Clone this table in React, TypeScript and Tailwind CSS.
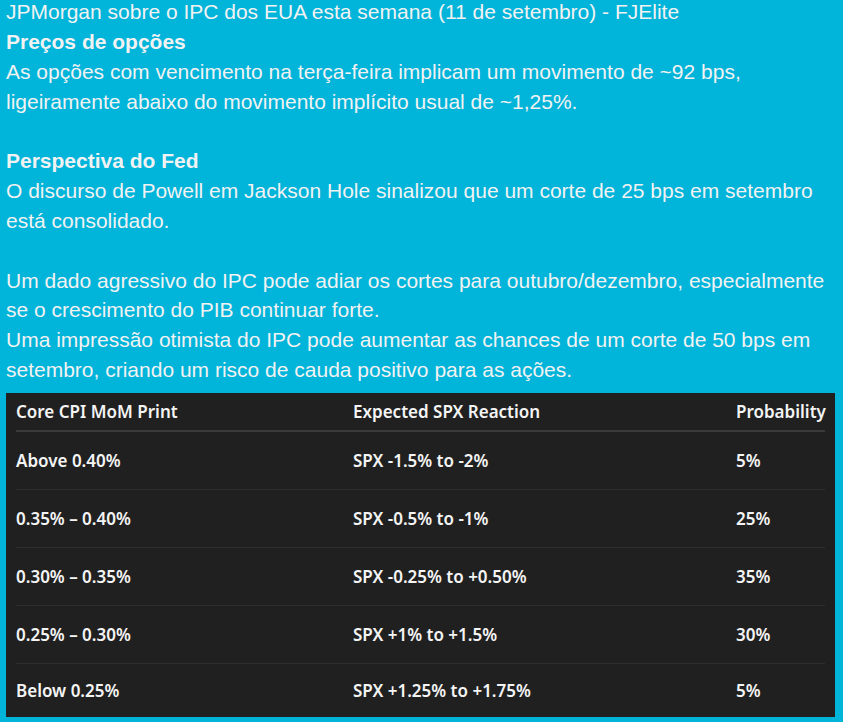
import React from "react";

const rows = [
  ["Above 0.40%", "SPX -1.5% to -2%", "5%"],
  ["0.35% – 0.40%", "SPX -0.5% to -1%", "25%"],
  ["0.30% – 0.35%", "SPX -0.25% to +0.50%", "35%"],
  ["0.25% – 0.30%", "SPX +1% to +1.5%", "30%"],
  ["Below 0.25%", "SPX +1.25% to +1.75%", "5%"],
];

export default function App() {
  return (
    <div className="w-[843px] h-[722px] overflow-hidden bg-[#00b4da] px-[6px]">
      <div
        className="mt-[-3px] text-[21px] leading-[29.85px] text-[#f2f2f2]"
        style={{ fontFamily: '"Liberation Sans", Arial, sans-serif' }}
      >
        <div>JPMorgan sobre o IPC dos EUA esta semana (11 de setembro) - FJElite</div>
        <div className="font-bold">Preços de opções</div>
        <div>As opções com vencimento na terça-feira implicam um movimento de ~92 bps,</div>
        <div>ligeiramente abaixo do movimento implícito usual de ~1,25%.</div>
        <div>&nbsp;</div>
        <div className="font-bold">Perspectiva do Fed</div>
        <div>O discurso de Powell em Jackson Hole sinalizou que um corte de 25 bps em setembro</div>
        <div>está consolidado.</div>
        <div>&nbsp;</div>
        <div>Um dado agressivo do IPC pode adiar os cortes para outubro/dezembro, especialmente</div>
        <div>se o crescimento do PIB continuar forte.</div>
        <div>Uma impressão otimista do IPC pode aumentar as chances de um corte de 50 bps em</div>
        <div>setembro, criando um risco de cauda positivo para as ações.</div>
      </div>
      <div
        className="mt-[8px] w-[829px] h-[324px] bg-[#202020] px-[10px] text-[17px] font-semibold text-[#f4f4f4]"
        style={{ fontFamily: '"Noto Sans", "Open Sans", sans-serif' }}
      >
        <div className="grid grid-cols-[337px_383px_1fr] h-[39px] items-center border-b-2 border-[#3a3a3a]">
          <div>Core CPI MoM Print</div>
          <div>Expected SPX Reaction</div>
          <div>Probability</div>
        </div>
        {rows.map((r, i) => (
          <div
            key={i}
            className={
              "grid grid-cols-[337px_383px_1fr] items-center " +
              (i < rows.length - 1 ? "h-[58px] border-b border-[#2e2e2e]" : "h-[53px]")
            }
          >
            <div>{r[0]}</div>
            <div>{r[1]}</div>
            <div>{r[2]}</div>
          </div>
        ))}
      </div>
    </div>
  );
}
